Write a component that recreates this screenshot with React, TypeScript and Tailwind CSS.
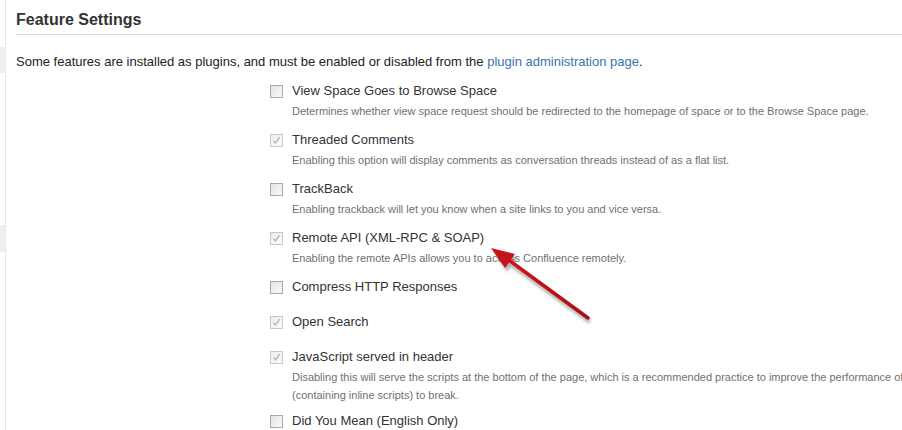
import React from "react";

type Item = { label: string; desc?: string[]; checked: boolean; pb: string };

const items: Item[] = [
  {
    label: "View Space Goes to Browse Space",
    desc: [
      "Determines whether view space request should be redirected to the homepage of space or to the Browse Space page.",
    ],
    checked: false,
    pb: "flex flex-col pb-[10px]",
  },
  {
    label: "Threaded Comments",
    desc: ["Enabling this option will display comments as conversation threads instead of as a flat list."],
    checked: true,
    pb: "flex flex-col pb-[10px]",
  },
  {
    label: "TrackBack",
    desc: ["Enabling trackback will let you know when a site links to you and vice versa."],
    checked: false,
    pb: "flex flex-col pb-[10px]",
  },
  {
    label: "Remote API (XML-RPC & SOAP)",
    desc: ["Enabling the remote APIs allows you to access Confluence remotely."],
    checked: true,
    pb: "flex flex-col pb-[10px]",
  },
  { label: "Compress HTTP Responses", checked: false, pb: "flex flex-col pb-[15px]" },
  { label: "Open Search", checked: true, pb: "flex flex-col pb-[15px]" },
  {
    label: "JavaScript served in header",
    desc: [
      "Disabling this will serve the scripts at the bottom of the page, which is a recommended practice to improve the performance of your Confluence pages. This may cause some existing macros",
      "(containing inline scripts) to break.",
    ],
    checked: true,
    pb: "flex flex-col pb-[7px]",
  },
  { label: "Did You Mean (English Only)", checked: false, pb: "flex flex-col pb-[15px]" },
];

function Box({ checked }: { checked: boolean }) {
  return (
    <span
      className={
        checked
          ? "relative flex h-[13px] w-[13px] shrink-0 items-center justify-center border border-[#c9c9c9] bg-gradient-to-br from-[#ececec] to-[#fbfbfb]"
          : "relative flex h-[13px] w-[13px] shrink-0 items-center justify-center border border-[#a9a9a9] bg-gradient-to-br from-[#e3e3e3] to-[#fafafa]"
      }
    >
      {checked && (
        <svg width="9" height="9" viewBox="0 0 9 9" className="block">
          <path d="M1.5 4.8 L3.5 7 L7.6 1.2" fill="none" stroke="#b4b4b4" strokeWidth="1.3" />
        </svg>
      )}
    </span>
  );
}

export default function App() {
  return (
    <div
      className="relative flex h-[430px] w-[902px] overflow-hidden bg-white text-[#333333]"
      style={{ fontFamily: '"Liberation Sans", Arial, sans-serif' }}
    >
      <div className="flex w-[6px] shrink-0 flex-col border-r border-[#e8e8e8]">
        <div className="mt-[47px] h-[26px] w-[5px] bg-[#efefef]" />
        <div className="mt-[152px] h-[27px] w-[5px] bg-[#efefef]" />
      </div>
      <div className="flex min-w-0 flex-1 flex-col pl-[10px]">
        <h2 className="border-b border-[#dddddd] pt-[10px] pb-[4px] text-[16px] font-bold leading-[20px] text-[#333333]">
          Feature Settings
        </h2>
        <p className="mt-[18px] text-[13px] leading-[18px] text-[#222222]">
          Some features are installed as plugins, and must be enabled or disabled from the{" "}
          <span className="text-[#3b73af]">plugin administration page</span>.
        </p>
        <ul className="mt-[10px] ml-[254px] flex flex-col">
          {items.map((it) => (
            <li key={it.label} className={it.pb}>
              <div className="flex h-[20px] items-center gap-[9px]">
                <Box checked={it.checked} />
                <span className="whitespace-nowrap text-[13px] leading-[20px] text-[#333333]">{it.label}</span>
              </div>
              {it.desc && (
                <div className="mt-[1px] pl-[22px]">
                  {it.desc.map((d) => (
                    <div key={d} className="whitespace-nowrap text-[11px] leading-[18px] text-[#707070]">
                      {d}
                    </div>
                  ))}
                </div>
              )}
            </li>
          ))}
        </ul>
      </div>
      <svg
        className="pointer-events-none absolute left-0 top-0"
        width="902"
        height="430"
        viewBox="0 0 902 430"
      >
        <defs>
          <filter id="blur" x="-20%" y="-20%" width="140%" height="140%">
            <feGaussianBlur stdDeviation="1.6" />
          </filter>
          <linearGradient id="red" x1="0" y1="0" x2="0" y2="1">
            <stop offset="0" stopColor="#d0161c" />
            <stop offset="1" stopColor="#a80e12" />
          </linearGradient>
        </defs>
        <g filter="url(#blur)" opacity="0.45" transform="translate(2,4)">
          <line x1="508" y1="260" x2="588" y2="318" stroke="#555" strokeWidth="4" />
          <polygon points="492,248 505,268 515,254" fill="#555" />
        </g>
        <line x1="506" y1="258" x2="588" y2="318" stroke="url(#red)" strokeWidth="3.5" strokeLinecap="round" />
        <polygon points="491,248 505,268 515,254" fill="#c41419" />
      </svg>
    </div>
  );
}
